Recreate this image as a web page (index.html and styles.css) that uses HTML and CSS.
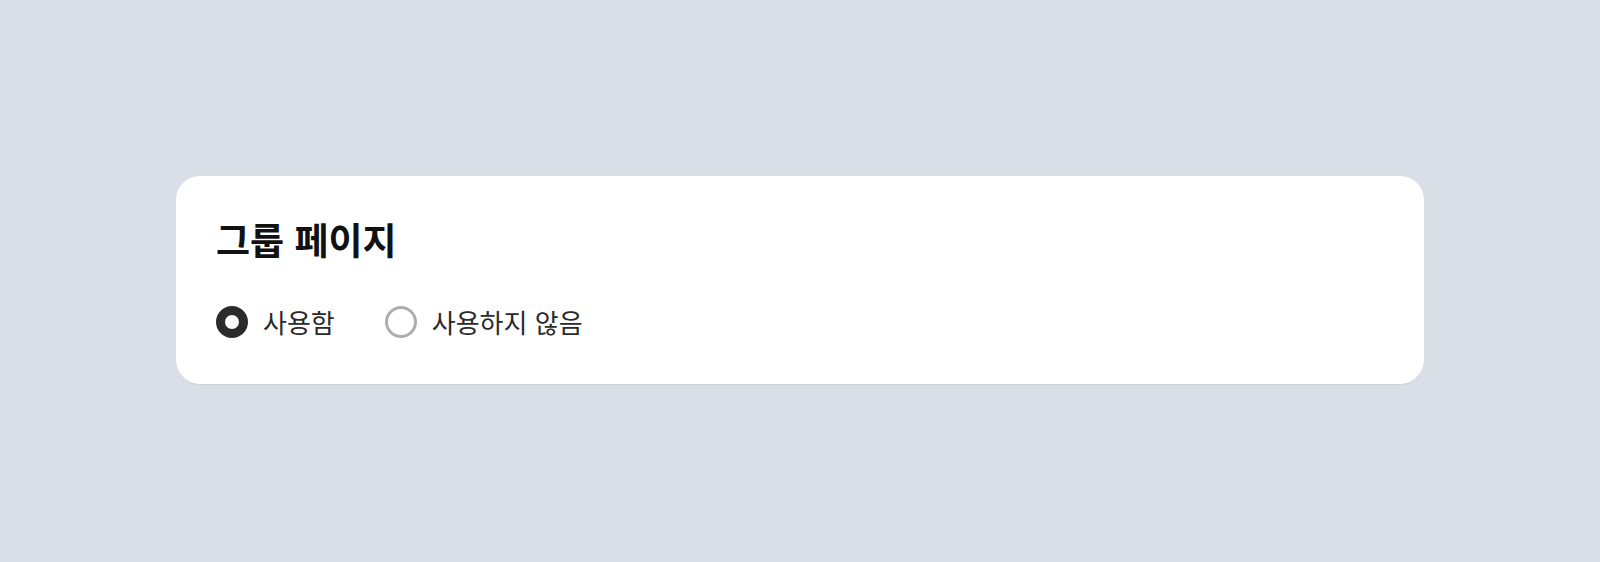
FILE: index.html
```html
<!DOCTYPE html>
<html lang="ko">
<head>
<meta charset="utf-8">
<title>그룹 페이지</title>
<link rel="stylesheet" href="styles.css">
</head>
<body>
<main class="page">
  <section class="card">
    <h2 class="card-title">그룹 페이지</h2>
    <div class="radio-group" role="radiogroup">
      <label class="radio">
        <input type="radio" name="group-page" checked>
        <span class="radio-mark"></span>
        <span class="radio-label">사용함</span>
      </label>
      <label class="radio">
        <input type="radio" name="group-page">
        <span class="radio-mark"></span>
        <span class="radio-label">사용하지 않음</span>
      </label>
    </div>
  </section>
</main>
</body>
</html>
```

FILE: styles.css
```css
* { box-sizing: border-box; }
html, body { margin: 0; padding: 0; }
body {
  background: #d9dfe7;
  font-family: "Noto Sans CJK KR", "Noto Sans", sans-serif;
  color: #222;
}
.page {
  min-height: 562px;
  display: flex;
  align-items: center;
  justify-content: center;
  padding-bottom: 2px;
}
.card {
  width: 1248px;
  background: #fff;
  border-radius: 24px;
  padding: 40px 40px 46px;
  box-shadow: 0 1px 1px rgba(0, 0, 0, 0.06);
}
.card-title {
  margin: 0;
  font-size: 37px;
  font-weight: 700;
  line-height: 46px;
  color: #111;
}
.radio-group {
  display: flex;
  align-items: center;
  gap: 50px;
  margin-top: 44px;
  height: 32px;
}
.radio {
  display: flex;
  align-items: center;
  gap: 15px;
  cursor: pointer;
}
.radio input {
  display: none;
}
.radio-mark {
  width: 32px;
  height: 32px;
  border-radius: 50%;
  border: 3px solid #adadad;
  background: #fff;
  flex: none;
}
.radio input:checked + .radio-mark {
  border: 9px solid #2b2b2b;
}
.radio-label {
  font-size: 26px;
  line-height: 32px;
  color: #2a2a2a;
}
```
